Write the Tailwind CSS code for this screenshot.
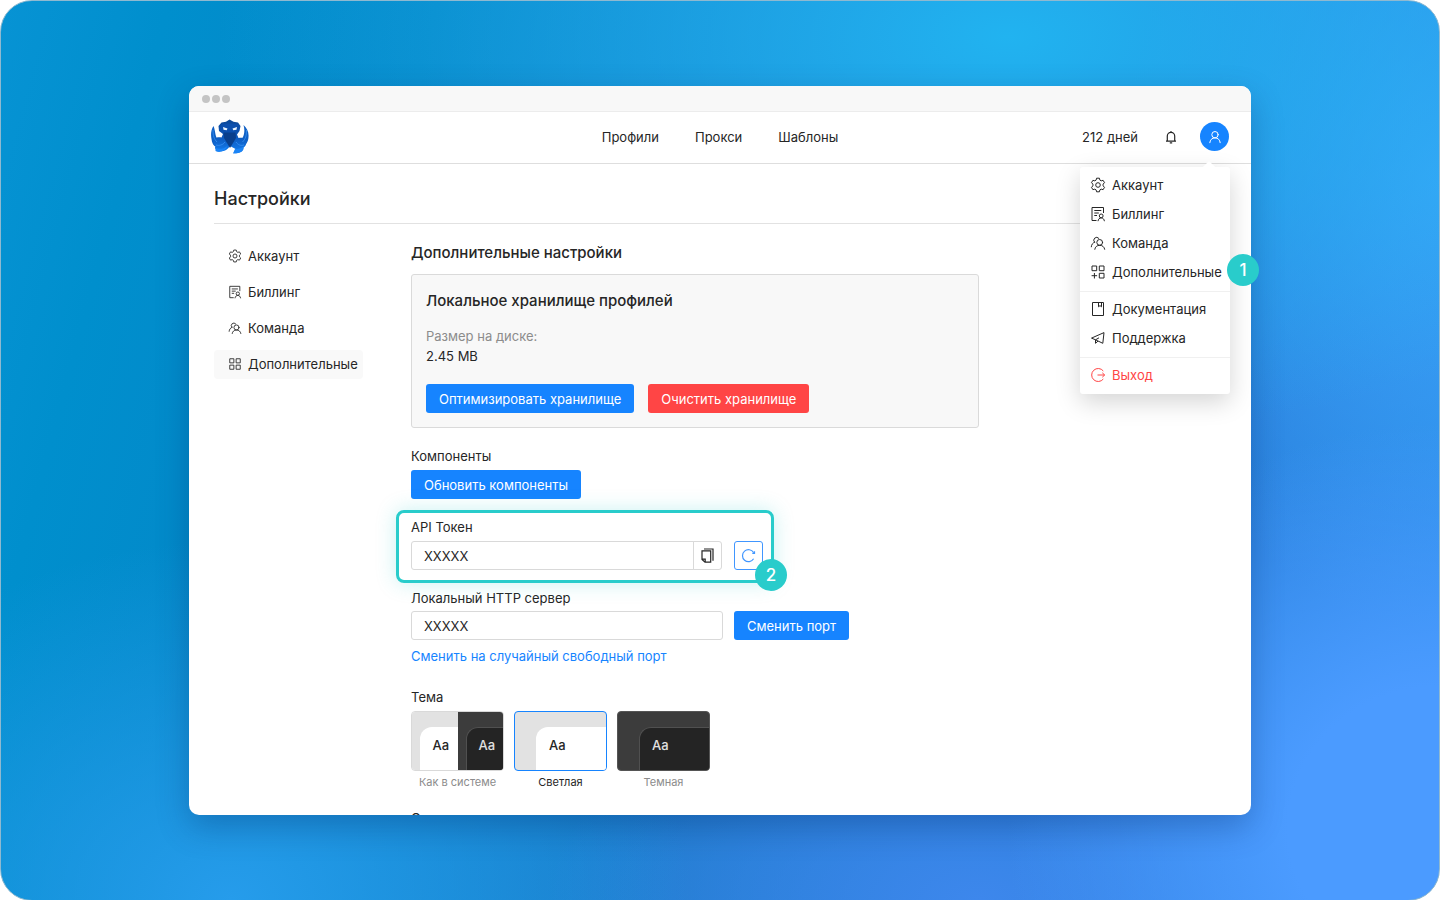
<!DOCTYPE html>
<html lang="ru">
<head>
<meta charset="utf-8">
<meta name="viewport" content="width=device-width, initial-scale=1">
<title>Настройки</title>
<script src="https://cdn.jsdelivr.net/npm/@tailwindcss/browser@4"></script>
</head>
<body class="bg-white font-['Inter','Liberation_Sans',sans-serif] text-[13px] leading-5 text-[#262626]">
<svg class="hidden" aria-hidden="true">
  <symbol id="gear" viewBox="0 0 16 16" fill="none" stroke="currentColor" stroke-linejoin="round">
    <path d="M6.600 1.200h2.800l.5 1.900 1.300.75 1.900-.55 1.400 2.400-1.400 1.400v1.800l1.400 1.400-1.400 2.400-1.900-.55-1.300.75-.5 1.900H6.600l-.5-1.900-1.300-.75-1.900.55-1.400-2.400 1.400-1.400V7.100L1.500 5.700l1.400-2.400 1.900.55 1.300-.75z"/><circle cx="8" cy="8" r="2.300"/>
  </symbol>
  <symbol id="bill" viewBox="0 0 16 16" fill="none" stroke="currentColor">
    <path d="M6.500 14.500H2v-13h11.500V7M4.300 4.500h7M4.300 7h4.500M4.300 9.500H7"/><circle cx="11.200" cy="9.900" r="1.900"/><path d="M8 15.200c.2-2 1.500-3.300 3.200-3.300s3 1.300 3.200 3.300"/>
  </symbol>
  <symbol id="team" viewBox="0 0 16 16" fill="none" stroke="currentColor" stroke-linecap="round">
    <circle cx="9.700" cy="7.400" r="2.900"/><path d="M4.800 14.300c.3-2.400 2.200-4 4.900-4s4.600 1.600 5 4M8.800 3.300A2.900 2.900 0 1 0 4.500 7.200M1.300 11.800c.2-2.300 1.400-3.900 3.300-4.600"/>
  </symbol>
  <symbol id="grid" viewBox="0 0 16 16" fill="none" stroke="currentColor">
    <path d="M2 2h4.700v4.700H2zM9.300 2H14v4.700H9.300zM2 9.300h4.700V14H2zM9.300 9.300H14V14H9.300z"/>
  </symbol>
  <symbol id="gridplus" viewBox="0 0 16 16" fill="none" stroke="currentColor">
    <path d="M2 2h4.700v4.700H2zM9.300 2H14v4.700H9.300zM9.300 9.300H14V14H9.300zM4.400 9v5.500M1.600 11.700h5.500"/>
  </symbol>
  <symbol id="doc" viewBox="0 0 16 16" fill="none" stroke="currentColor">
    <path d="M2.500 1.500h11v13h-11zM8.500 1.500v4.300l1.500-1.200 1.500 1.200V1.500"/>
  </symbol>
  <symbol id="plane" viewBox="0 0 16 16" fill="none" stroke="currentColor" stroke-linejoin="round">
    <path d="M14 2.600 1.500 8.100l4 1.700 7.300 3.500zM5.500 9.800v3.500l2.500-2.200M5.500 9.800 9 7.800"/>
  </symbol>
  <symbol id="exit" viewBox="0 0 16 16" fill="none" stroke="currentColor">
    <path d="M13.300 4A6.500 6.500 0 1 0 13.300 12M7.500 8h7M12.300 5.800 14.700 8l-2.400 2.200"/>
  </symbol>
</svg>

<div class="flex min-h-screen flex-col rounded-[32px] border border-[#8fb9d0] bg-[radial-gradient(ellipse_30%_45%_at_100%_92%,#4b9bff_0%,#4b9bff_35%,transparent_100%),radial-gradient(ellipse_55%_45%_at_70%_4%,#21b3f0_0%,transparent_100%),radial-gradient(ellipse_32%_40%_at_16%_100%,#269ceb_0%,transparent_100%),radial-gradient(ellipse_22%_50%_at_100%_20%,#3aa2f7_0%,transparent_100%),radial-gradient(ellipse_30%_25%_at_68%_100%,#3d87ec_0%,transparent_100%),linear-gradient(105deg,#0793d4_0%,#008fcd_10%,#0487c8_26%,#1f7ccd_55%,#2a80dc_80%,#2f90ee_100%)] px-[188px] py-[85px]">
  <div class="relative flex h-[729px] flex-col rounded-[10px] bg-white shadow-[0_12px_32px_rgba(0,40,100,0.3)]">
    <div class="flex h-[26px] shrink-0 items-center gap-[2px] rounded-t-[10px] border-b border-[#ececec] bg-[#f8f8f8] px-[13px] pt-px">
      <span class="size-2 rounded-full bg-[#c4c4c4]"></span>
      <span class="size-2 rounded-full bg-[#c4c4c4]"></span>
      <span class="size-2 rounded-full bg-[#c4c4c4]"></span>
    </div>

    <header class="grid h-[52px] shrink-0 grid-cols-3 items-center border-b border-[#dedede] px-[22px] pb-[2px]">
      <a href="#" aria-label="Главная" class="justify-self-start">
        <svg class="h-[36px] w-[38px]" viewBox="0 0 38 36">
          <defs><linearGradient id="oct" x1="0" y1="0" x2="0" y2="1"><stop offset="0" stop-color="#0b4796"/><stop offset=".5" stop-color="#0d57bb"/><stop offset="1" stop-color="#147ff0"/></linearGradient></defs>
          <path fill="#0f5fc4" d="M2.500 7C-.2 11-.3 16 .5 20c.3 4 2 7 5 8l6-4-1-5-4 1C4 17 4.500 12 2.500 7zM32.500 6c1.500 5 1 10-1.500 14l-4-1-1 5 6 4c3-2 5.500-6 5.500-10 .5-5-1.500-9-5-12z"/>
          <path fill="url(#oct)" d="M18.500.5l4 2.300 4.500.7 2.500 3.500-1 5-2.500 3.500 1.500 3.500c5-1 9 1 8 4-.5 3-1.500 5-3 5.500.5 4-3.500 6-10 5.500l2-4-5.500-3c-3 5-8 6.500-12.500 4.500-2.500-1-3-3-2-4.500-2.500-2-2.500-5-1-7 1-1.500 4-2 7-1.500l1.500-3.500L8 12 7.500 7l3-3.500 4.500-.7z"/>
          <path fill="#1b84f6" d="M4.500 29c4 1.500 8 1 12-2-2 5-8 7.500-12 5zM24 30c4 .5 6-1 8.500-2.500C33 32 28 35 22 34.500z"/>
          <path fill="#0b4fae" d="M10 5.500c3-1 14-1 17.500 0l.5 4c-1 3-3 4-6 4h-6c-3 0-5-1-6.500-4z"/>
          <path fill="#093f8c" d="M12.500 13.500h12L25 19l-6 10-6-10z"/>
          <path fill="none" stroke="#3a93f5" stroke-width=".8" d="M2 11c0 6 1 9 4 12M35.500 11c0 6-1 9-4 12M5 26c3 1 7 0 9-3M33 26c-3 1-6 0-8-3"/>
          <path fill="#e8f4ff" d="M12 8l4.500 1.500-.8 1.800-3.200-.6zM26 8l-4.500 1.500.8 1.800 3.200-.6z"/>
        </svg>
      </a>
      <nav class="flex justify-center gap-9 justify-self-center whitespace-nowrap">
        <a href="#">Профили</a><a href="#">Прокси</a><a href="#">Шаблоны</a>
      </nav>
      <div class="flex items-center justify-self-end">
        <span>212 дней</span>
        <button aria-label="Уведомления" class="ml-[26px] flex">
          <svg class="size-[14px]" viewBox="0 0 14 14" fill="none" stroke="currentColor" stroke-width="1.200"><path d="M2 11.200h10M3.300 11V6a3.700 3.700 0 0 1 7.400 0v5M7 1v1.300M5.800 12.800h2.400"/></svg>
        </button>
        <button aria-label="Профиль" class="ml-[22px] flex size-[29px] items-center justify-center rounded-full bg-[#1684ff] text-white">
          <svg class="size-[14px]" viewBox="0 0 14 14" fill="none" stroke="currentColor" stroke-linecap="round"><circle cx="7" cy="4.700" r="3.200"/><path d="M1.800 12.700c.3-3 2.300-4.800 5.200-4.800s4.900 1.800 5.200 4.800"/></svg>
        </button>
      </div>
    </header>

    <main class="min-h-0 flex-1 overflow-hidden px-[25px]">
      <h1 class="flex h-[60px] items-center border-b border-[#e2e2e2] pt-[10px] text-[18px] leading-6 font-medium">Настройки</h1>
      <div class="flex">
        <nav class="flex w-[149px] shrink-0 flex-col gap-[7px] pt-[18px]">
          <a href="#" class="flex h-[29px] items-center gap-[6px] rounded px-[14px] pb-px"><svg class="size-[14px] shrink-0"><use href="#gear"/></svg>Аккаунт</a>
          <a href="#" class="flex h-[29px] items-center gap-[6px] rounded px-[14px] pb-px"><svg class="size-[14px] shrink-0"><use href="#bill"/></svg>Биллинг</a>
          <a href="#" class="flex h-[29px] items-center gap-[6px] rounded px-[14px] pb-px"><svg class="size-[14px] shrink-0"><use href="#team"/></svg>Команда</a>
          <a href="#" class="flex h-[29px] items-center gap-[6px] rounded bg-[#f9f9f9] pb-px pl-[14px]"><svg class="size-[14px] shrink-0"><use href="#grid"/></svg>Дополнительные</a>
        </nav>

        <div class="ml-12 flex-1 pt-[18px]">
          <h2 class="text-[15px] leading-[22px] font-medium">Дополнительные настройки</h2>
          <section class="mt-[10px] w-[568px] max-w-full rounded-[3px] border border-[#dadada] bg-[#f8f8f8] px-[14px] pt-[15px] pb-[14px]">
            <h3 class="text-[15px] leading-[22px] font-medium">Локальное хранилище профилей</h3>
            <p class="mt-[14px] text-[#8c8c8c]">Размер на диске:</p>
            <p>2.45 MB</p>
            <div class="mt-[18px] flex gap-[14px]">
              <button class="h-[29px] rounded-[3px] bg-[#1684ff] px-[13px] text-white">Оптимизировать хранилище</button>
              <button class="h-[29px] rounded-[3px] bg-[#ff4545] px-[13px] text-white">Очистить хранилище</button>
            </div>
          </section>

          <p class="mt-[18px]">Компоненты</p>
          <button class="mt-1 h-[29px] rounded-[3px] bg-[#1684ff] px-[13px] text-white">Обновить компоненты</button>

          <div class="relative -ml-[15px] mt-[11px] w-[378px] rounded-lg border-3 border-[#29cccb] pt-1 pr-2 pb-[10px] pl-3 shadow-[0_0_20px_rgba(41,204,203,0.25)]">
            <label for="token" class="block">API Токен</label>
            <div class="mt-1 flex">
              <input id="token" type="text" value="XXXXX" class="h-[29px] w-[283px] rounded-l-[3px] border border-[#d9d9d9] bg-white px-3">
              <button aria-label="Копировать" class="-ml-px flex h-[29px] w-[29px] items-center justify-center rounded-r-[3px] border border-[#d9d9d9]">
                <svg class="size-[15px]" viewBox="0 0 15 15" fill="none" stroke="currentColor" stroke-width="1.200"><path d="M4 1h9v11.700M2 2.900h8.700v11.300H5L2 11.400zM2 11.200h3.200v3"/></svg>
              </button>
              <button aria-label="Обновить токен" class="ml-3 flex size-[29px] shrink-0 items-center justify-center rounded-[3px] border border-[#4096ff] text-[#4096ff]">
                <svg class="size-[15px]" viewBox="0 0 15 15" fill="none" stroke="currentColor" stroke-width="1.200"><path d="M12.600 10.800A6 6 0 1 1 12.600 4.500M13.500 3.200v2.200h-2.200"/></svg>
              </button>
            </div>
            <span class="absolute -right-4 -bottom-[11px] flex size-8 items-center justify-center rounded-full bg-[#29cccb] text-[17px] font-medium text-white">2</span>
          </div>

          <label for="port" class="mt-[5px] block">Локальный HTTP сервер</label>
          <div class="mt-[3px] flex gap-[11px]">
            <input id="port" type="text" value="XXXXX" class="h-[29px] w-[312px] rounded-[3px] border border-[#d9d9d9] bg-white px-3">
            <button class="h-[29px] rounded-[3px] bg-[#1684ff] px-[13px] text-white">Сменить порт</button>
          </div>
          <a href="#" class="mt-[6px] block text-[#1684ff]">Сменить на случайный свободный порт</a>

          <p class="mt-[21px]">Тема</p>
          <div class="mt-1 flex gap-[10px] text-center text-[11px] leading-4 text-[#8c8c8c]">
            <button class="w-[93px]">
              <span class="flex h-[60px] overflow-hidden rounded border border-[#d9d9d9] text-[13px] font-medium">
                <span class="flex flex-1 bg-[#e2e2e2] pt-[15px] pl-2"><span class="flex flex-1 items-center justify-center rounded-tl-[12px] bg-white pb-2 pl-1 text-[#262626]">Aa</span></span>
                <span class="flex flex-1 bg-[#3c3c3c] pt-[15px] pl-2"><span class="flex flex-1 items-center justify-center rounded-tl-[12px] border-t border-l border-[#505050] bg-[#242424] pb-2 pl-1 text-[#e0e0e0]">Aa</span></span>
              </span>
              <span class="mt-[3px] block">Как в системе</span>
            </button>
            <button class="w-[93px]">
              <span class="flex h-[60px] overflow-hidden rounded border border-[#1684ff] bg-[#e2e2e2] pt-[15px] pl-[21px] text-[13px] font-medium">
                <span class="flex flex-1 items-center rounded-tl-[12px] bg-white pb-2 pl-[13px] text-[#262626]">Aa</span>
              </span>
              <span class="mt-[3px] block text-[#262626]">Светлая</span>
            </button>
            <button class="w-[93px]">
              <span class="flex h-[60px] overflow-hidden rounded border border-[#555555] bg-[#3c3c3c] pt-[15px] pl-[21px] text-[13px] font-medium">
                <span class="flex flex-1 items-center rounded-tl-[12px] border-t border-l border-[#505050] bg-[#242424] pb-2 pl-[12px] text-[#e0e0e0]">Aa</span>
              </span>
              <span class="mt-[3px] block">Темная</span>
            </button>
          </div>
          <p class="mt-[18px]">О</p>
        </div>
      </div>
    </main>

    <div class="absolute top-[81px] right-[21px] w-[150px] rounded-[3px] bg-white pt-[3px] pb-[5px] shadow-[0_8px_24px_rgba(0,0,0,0.17)]">
      <span class="absolute -top-1 right-[16px] size-[10px] rotate-45 rounded-[1px] bg-white"></span>
      <a href="#" class="relative flex h-[29px] items-center gap-[6px] px-[10px]"><svg class="size-4 shrink-0"><use href="#gear"/></svg>Аккаунт</a>
      <a href="#" class="flex h-[29px] items-center gap-[6px] px-[10px]"><svg class="size-4 shrink-0"><use href="#bill"/></svg>Биллинг</a>
      <a href="#" class="flex h-[29px] items-center gap-[6px] px-[10px]"><svg class="size-4 shrink-0"><use href="#team"/></svg>Команда</a>
      <a href="#" class="relative flex h-[29px] items-center gap-[6px] px-[10px]"><svg class="size-4 shrink-0"><use href="#gridplus"/></svg>Дополнительные
        <span class="absolute -top-[3px] -right-[29px] flex size-8 items-center justify-center rounded-full bg-[#29cccb] text-[17px] font-medium text-white">1</span></a>
      <hr class="mt-[5px] mb-[2px] border-[#f0f0f0]">
      <a href="#" class="flex h-[29px] items-center gap-[6px] px-[10px]"><svg class="size-4 shrink-0"><use href="#doc"/></svg>Документация</a>
      <a href="#" class="flex h-[29px] items-center gap-[6px] px-[10px]"><svg class="size-4 shrink-0"><use href="#plane"/></svg>Поддержка</a>
      <hr class="mt-[5px] mb-[2px] border-[#f0f0f0]">
      <a href="#" class="flex h-[29px] items-center gap-[6px] px-[10px] text-[#ff4545]"><svg class="size-4 shrink-0"><use href="#exit"/></svg>Выход</a>
    </div>
  </div>
</div>
</body>
</html>
